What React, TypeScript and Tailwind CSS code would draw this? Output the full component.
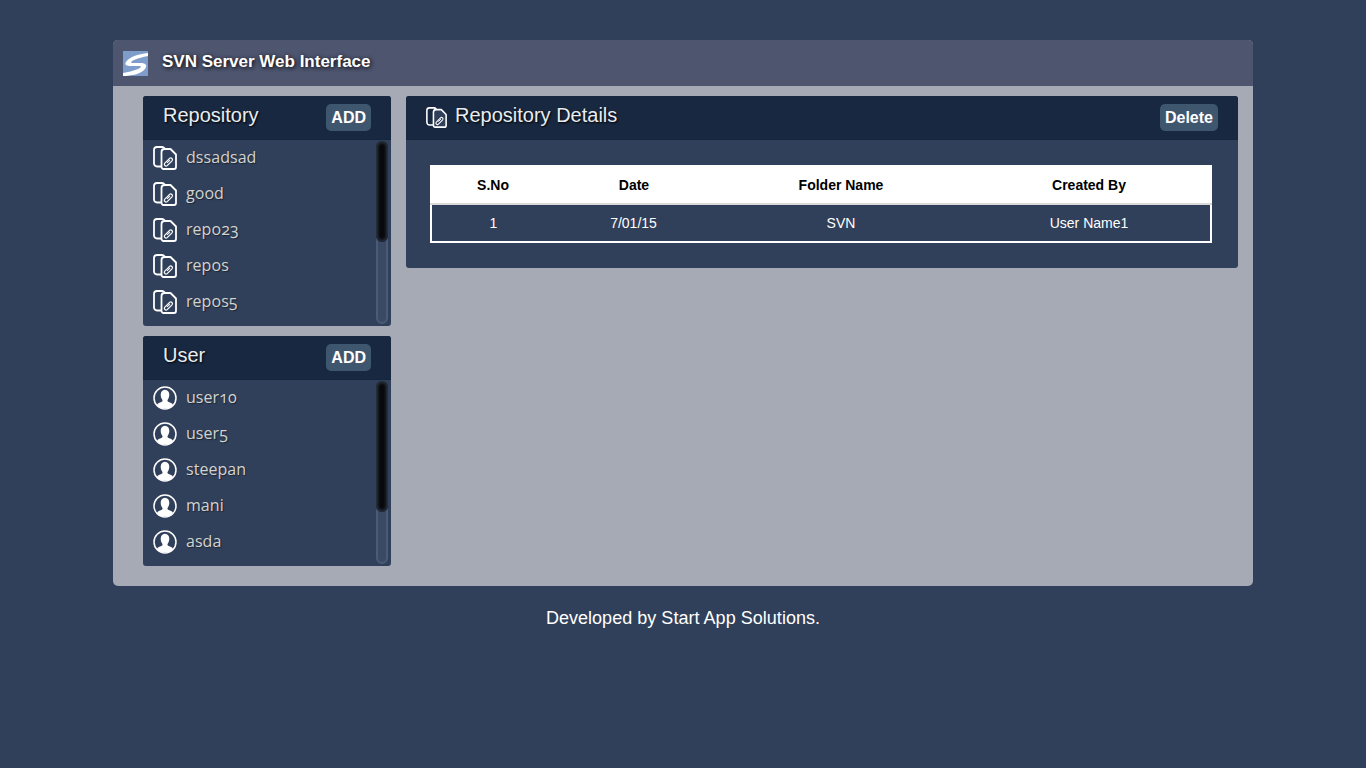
const listFont = "font-['Open_Sans',sans-serif]"

function RepoIcon({ small = false }: { small?: boolean }) {
  return (
    <svg viewBox="0 0 24 24" className={small ? 'h-[21px] w-[21px]' : 'h-6 w-6'} fill="none" stroke="#fff" strokeWidth="1.8">
      <path d="M8.500 20.500H4a3 3 0 0 1-3-3V4a3 3 0 0 1 3-3h5a3 3 0 0 1 2.500 1.300" strokeLinecap="round" />
      <path d="M8.500 6a3 3 0 0 1 3-3h6l5.500 5.500V21a2 2 0 0 1-2 2H10.500a2 2 0 0 1-2-2Z" fill="#31405a" strokeLinejoin="round" />
      <path d="M11.800 17.200 16.600 12.400a1.700 1.700 0 0 1 2.400 2.400l-4.800 4.800a1.700 1.700 0 0 1-2.400-2.400Z" strokeWidth="1.200" />
      <path d="m14 16.800 3-3" strokeWidth="1.100" />
    </svg>
  )
}

function UserIcon() {
  return (
    <svg viewBox="0 0 24 24" className="h-6 w-6">
      <circle cx="12" cy="12" r="11" fill="#31405a" stroke="#fff" strokeWidth="1.500" />
      <path
        d="M12 3.800c2.700 0 4.300 2.200 4.300 5 0 2-.7 3.900-1.600 5-.4.500-.3 1.500.4 1.900 1.500.8 3.400 1.100 4.400 2.200.5.600.5 1.400 0 2A10 10 0 0 1 12 22.600 10 10 0 0 1 4.500 19.900c-.5-.6-.5-1.400 0-2 1-1.100 2.900-1.400 4.400-2.200.7-.4.800-1.400.4-1.900-.9-1.100-1.600-3-1.600-5 0-2.800 1.600-5 4.300-5Z"
        fill="#fff"
      />
    </svg>
  )
}

function SideCard({ title, items, icon, thumb }: { title: string; items: string[]; icon: React.ReactNode; thumb: string }) {
  return (
    <div className="flex h-[230px] flex-col overflow-hidden rounded-[3px] bg-[#31405a]">
      <div className="flex h-[44px] shrink-0 items-start justify-between border-b border-[#13263d] bg-[#182840] pl-5 pr-5">
        <span className="pt-[6px] text-[20px] leading-[26px] text-[#e8ecf1] [text-shadow:1px_1px_2px_#000]">{title}</span>
        <button className="mt-2 h-[27px] rounded-[5px] bg-[#3f566f] px-[5px] text-[16px] font-bold text-white">ADD</button>
      </div>
      <div className="flex min-h-0 flex-1">
        <ul className="flex-1 pl-[10px]">
          {items.map((item) => (
            <li key={item} className="flex h-9 items-center gap-[9px]">
              {icon}
              <span className={`${listFont} pb-[2px] text-[16px] tracking-[0.05px] text-[#d3d3cf] oldstyle-nums [text-shadow:1px_1px_1px_#1c2536]`}>{item}</span>
            </li>
          ))}
        </ul>
        <div className="mb-[2px] mr-[3px] mt-[1px] h-[183px] w-3 rounded-full border-2 border-[#4a5b76] bg-[#3a4a64]">
          <div className={`${thumb} -mx-[2px] -mt-[2px] rounded-full bg-[#08090c] shadow-[inset_0_0_3px_2px_#2a3344]`} />
        </div>
      </div>
    </div>
  )
}

export default function App() {
  return (
    <div className="h-[768px] overflow-hidden bg-[#31405a] pt-10 font-['Liberation_Sans',Arial,sans-serif]">
      <div className="mx-auto w-[1140px] overflow-hidden rounded-[5px] bg-[#a6aab5]">
        <header className="flex h-[46px] items-center gap-[14px] bg-[#4d556f] pl-[10px]">
          <svg viewBox="0 0 25 25" className="h-[25px] w-[25px]">
            <rect width="25" height="25" fill="#7f9dcb" />
            <path d="M25 2C15 3 6 6 3 11c-2 3 1 4 5 4h8c3 0 2 2-1 3-5 2-10 3-15 4v3c8 0 18-2 22-7 3-4 0-6-4-6h-8c-3 0-2-2 1-3 4-2 9-3 14-4Z" fill="#fff" />
          </svg>
          <h1 className="pb-[2px] text-[17px] font-bold text-white [text-shadow:1px_1px_4px_#000]">SVN Server Web Interface</h1>
        </header>
        <div className="flex h-[500px] items-start gap-[15px] pl-[30px] pt-[10px]">
          <div className="flex w-[248px] flex-col gap-[10px]">
            <SideCard title="Repository" items={['dssadsad', 'good', 'repo23', 'repos', 'repos5']} icon={<RepoIcon />} thumb="h-[101px]" />
            <SideCard title="User" items={['user10', 'user5', 'steepan', 'mani', 'asda']} icon={<UserIcon />} thumb="h-[131px]" />
          </div>
          <section className="h-[172px] w-[832px] overflow-hidden rounded-[3px] bg-[#31405a]">
            <div className="flex h-[44px] items-start justify-between border-b border-[#13263d] bg-[#182840] pl-5 pr-5">
              <div className="flex items-start gap-[9px]">
                <div className="pt-[11px]">
                  <RepoIcon small />
                </div>
                <span className="-ml-px pt-[6px] text-[20px] leading-[26px] text-[#e8ecf1] [text-shadow:1px_1px_2px_#000]">Repository Details</span>
              </div>
              <button className="mt-2 h-[27px] rounded-[5px] bg-[#3f566f] px-[5px] text-[16px] font-bold text-white">Delete</button>
            </div>
            <div className="ml-6 mt-[25px] w-[782px] text-center text-[14px]">
              <div className="grid h-[38px] grid-cols-[126px_156px_258px_238px] items-center bg-white pt-[2px] font-bold text-black">
                <span>S.No</span>
                <span>Date</span>
                <span>Folder Name</span>
                <span>Created By</span>
              </div>
              <div className="h-[2px] bg-[#d9d9d9]" />
              <div className="grid h-[38px] grid-cols-[123px_157px_258px_238px] items-center border-2 border-t-0 border-white text-white">
                <span>1</span>
                <span>7/01/15</span>
                <span>SVN</span>
                <span>User Name1</span>
              </div>
            </div>
          </section>
        </div>
      </div>
      <p className="mt-[21px] text-center text-[18px] leading-[22px] tracking-[0.03px] text-white">Developed by Start App Solutions.</p>
    </div>
  )
}
